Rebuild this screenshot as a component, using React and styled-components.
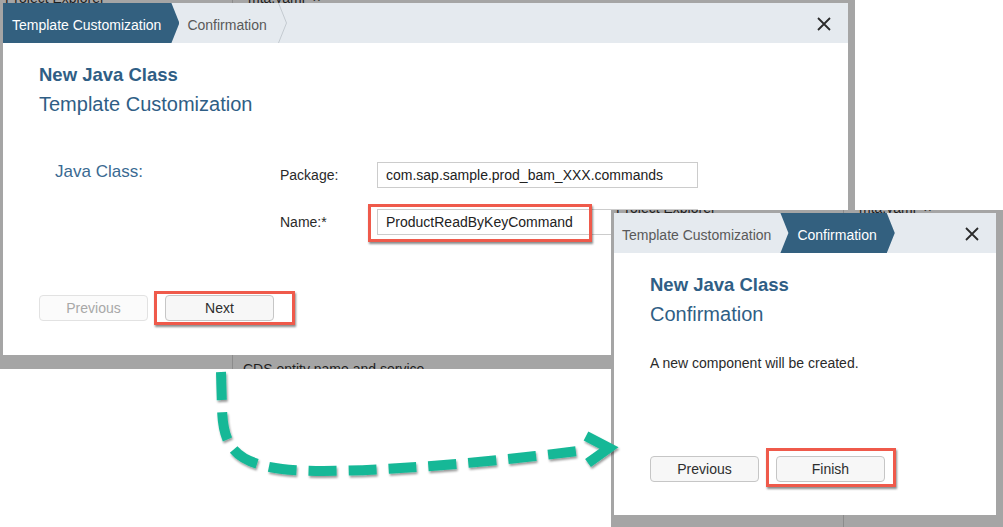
import React from "react";
import styled, { createGlobalStyle } from "styled-components";

const Global = createGlobalStyle`
  html, body { margin: 0; padding: 0; background: #fff; }
  body { font-family: "Liberation Sans", Arial, sans-serif; }
`;

const FONT = `"Liberation Sans", Arial, sans-serif`;

const Stage = styled.div`
  position: relative;
  width: 1003px;
  height: 527px;
  overflow: hidden;
  background: #fff;
`;

/* a captured screenshot placed on the composite canvas */
const Shot = styled.section`
  position: absolute;
  left: ${(p) => p.$x}px;
  top: ${(p) => p.$y}px;
  width: ${(p) => p.$w}px;
  height: ${(p) => p.$h}px;
  background: #a5a5a5;
  overflow: hidden;
`;

/* IDE underneath the modal dialog */
const Ide = styled.div`
  display: grid;
  grid-template-columns: 232px 1px 1fr;
  height: 100%;
  font: 14px/16px ${FONT};
  color: #1e1e1e;
`;
const ExplorerPane = styled.div`
  padding-left: 5px;
  white-space: nowrap;
`;
const PaneTitle = styled.div`
  margin-top: -10px;
`;
const PaneDivider = styled.div`
  background: #8c8c8c;
`;
const EditorPane = styled.div`
  display: flex;
  flex-direction: column;
  padding-left: 10px;
  white-space: nowrap;
`;
const EditorTab = styled.div`
  margin-top: -10px;
  padding-left: 5px;
`;
const EditorBody = styled.div`
  padding-top: 355px;
`;

/* modal dialog */
const Dialog = styled.div`
  position: absolute;
  top: 3px;
  left: 3px;
  width: ${(p) => p.$w}px;
  height: ${(p) => p.$h}px;
  background: #fff;
  display: flex;
  flex-direction: column;
  font-family: ${FONT};
`;

const Header = styled.header`
  flex: none;
  height: 40px;
  display: flex;
  align-items: stretch;
  background: #e5eaef;
`;

const Step = styled.div`
  display: flex;
  align-items: center;
  box-sizing: border-box;
  padding-top: 4px;
  padding-left: ${(p) => (p.$active ? (p.$notch ? 17 : 9) : 8)}px;
  padding-right: ${(p) => (p.$active ? 18 : 9)}px;
  font-size: 14px;
  white-space: nowrap;
  color: ${(p) => (p.$active ? "#ffffff" : "#595959")};
  background: ${(p) => (p.$active ? "#33607f" : "transparent")};
  clip-path: ${(p) =>
    !p.$active
      ? "none"
      : p.$notch
      ? "polygon(0 0, calc(100% - 8px) 0, 100% 50%, calc(100% - 8px) 100%, 0 100%, 8px 50%)"
      : "polygon(0 0, calc(100% - 8px) 0, 100% 50%, calc(100% - 8px) 100%, 0 100%)"};
`;

const StepChevron = styled.svg`
  flex: none;
  margin-left: 2px;
  width: 9px;
  height: 40px;
`;

const CloseButton = styled.button`
  margin-left: auto;
  margin-right: 17px;
  margin-top: 2px;
  align-self: center;
  width: 14px;
  height: 14px;
  padding: 0;
  border: 0;
  background: none;
  display: flex;
`;

const Body = styled.div`
  padding: 20px 36px 0;
  display: flex;
  flex-direction: column;
  align-items: flex-start;
`;

const Title = styled.h2`
  margin: 0;
  font-size: 18.5px;
  line-height: 24px;
  font-weight: 700;
  color: #2f5e85;
`;

const Subtitle = styled.h3`
  margin: 5px 0 0;
  font-size: 20px;
  line-height: 24px;
  font-weight: 400;
  color: #2f5e85;
`;

const FormGrid = styled.div`
  margin-top: 46px;
  display: grid;
  grid-template-columns: 241px 97px 321px;
  grid-auto-rows: 26px;
  row-gap: 21px;
  align-items: center;
`;

const SectionLabel = styled.div`
  align-self: start;
  padding-left: 16px;
  font-size: 17px;
  line-height: 20px;
  color: #3a6a92;
`;

const FieldLabel = styled.label`
  grid-column: 2;
  font-size: 14px;
  color: #2a2a2a;
`;

const FieldCell = styled.div`
  grid-column: 3;
  position: relative;
  height: 26px;
`;

const Input = styled.input`
  box-sizing: border-box;
  width: 100%;
  height: 26px;
  border: 1px solid #cccccc;
  padding: 0 8px;
  font: 14px ${FONT};
  color: #222;
  background: #fff;
  outline: none;
`;

const Message = styled.p`
  margin: 27px 0 0;
  font-size: 14px;
  line-height: 20px;
  color: #2a2a2a;
`;

const ButtonRow = styled.div`
  margin-top: ${(p) => p.$gap}px;
  display: flex;
  align-items: center;
  gap: 17px;
`;

const Button = styled.button`
  box-sizing: border-box;
  width: 109px;
  height: 26px;
  padding: 0;
  border-radius: 4px;
  border: 1px solid ${(p) => (p.disabled ? "#e2e2e2" : "#c6c6c6")};
  background: ${(p) => (p.disabled ? "#fbfbfb" : "#f7f7f7")};
  color: ${(p) => (p.disabled ? "#a8a8a8" : "#2e2e2e")};
  font: 14px ${FONT};
`;

const Annotated = styled.div`
  position: relative;
  display: flex;
`;

/* red call-out frame drawn over the screenshot */
const RedBox = styled.span`
  position: absolute;
  top: ${(p) => p.$t}px;
  right: ${(p) => p.$r}px;
  bottom: ${(p) => p.$b}px;
  left: ${(p) => p.$l}px;
  border: 3px solid #ef5a4b;
  box-shadow: 1px 2px 2px rgba(0, 0, 0, 0.45);
  pointer-events: none;
`;

const ArrowLayer = styled.svg`
  position: absolute;
  left: 0;
  top: 0;
  width: 1003px;
  height: 527px;
  pointer-events: none;
`;

function CloseIcon() {
  return (
    <svg width="14" height="14" viewBox="0 0 14 14">
      <path d="M1 1 L13 13 M13 1 L1 13" stroke="#2b2b2b" strokeWidth="1.8" fill="none" />
    </svg>
  );
}

function IdeBackdrop() {
  return (
    <Ide>
      <ExplorerPane>
        <PaneTitle>Project Explorer</PaneTitle>
      </ExplorerPane>
      <PaneDivider />
      <EditorPane>
        <EditorTab>mta.yaml &nbsp;×</EditorTab>
        <EditorBody>CDS entity name and service</EditorBody>
      </EditorPane>
    </Ide>
  );
}

function WizardHeader({ active }) {
  const first = active === 0;
  return (
    <Header>
      <Step $active={first}>Template Customization</Step>
      <Step $active={!first} $notch={!first}>Confirmation</Step>
      {first && (
        <StepChevron viewBox="0 0 9 40">
          <polyline points="0.5,0 8.5,20 0.5,40" fill="none" stroke="#c4cad0" strokeWidth="1" />
        </StepChevron>
      )}
      <CloseButton aria-label="Close">
        <CloseIcon />
      </CloseButton>
    </Header>
  );
}

export default function App() {
  return (
    <>
      <Global />
      <Stage>
        <Shot $x={0} $y={0} $w={855} $h={369}>
          <IdeBackdrop />
          <Dialog $w={845} $h={352}>
            <WizardHeader active={0} />
            <Body>
              <Title>New Java Class</Title>
              <Subtitle>Template Customization</Subtitle>
              <FormGrid>
                <SectionLabel>Java Class:</SectionLabel>
                <FieldLabel>Package:</FieldLabel>
                <FieldCell>
                  <Input readOnly value="com.sap.sample.prod_bam_XXX.commands" />
                </FieldCell>
                <FieldLabel>Name:*</FieldLabel>
                <FieldCell>
                  <Input readOnly value="ProductReadByKeyCommand" />
                  <RedBox $t={-5} $r={106} $b={-7} $l={-9} />
                </FieldCell>
              </FormGrid>
              <ButtonRow $gap={60}>
                <Button disabled>Previous</Button>
                <Annotated>
                  <Button>Next</Button>
                  <RedBox $t={-4} $r={-21} $b={-4} $l={-11} />
                </Annotated>
              </ButtonRow>
            </Body>
          </Dialog>
        </Shot>

        <Shot $x={611} $y={210} $w={392} $h={317}>
          <IdeBackdrop />
          <Dialog $w={382} $h={302}>
            <WizardHeader active={1} />
            <Body>
              <Title>New Java Class</Title>
              <Subtitle>Confirmation</Subtitle>
              <Message>A new component will be created.</Message>
              <ButtonRow $gap={83}>
                <Button>Previous</Button>
                <Annotated>
                  <Button>Finish</Button>
                  <RedBox $t={-8} $r={-11} $b={-5} $l={-10} />
                </Annotated>
              </ButtonRow>
            </Body>
          </Dialog>
        </Shot>

        <ArrowLayer viewBox="0 0 1003 527">
          <defs>
            <filter id="arrowShadow" x="-10%" y="-10%" width="120%" height="130%">
              <feDropShadow dx="1" dy="2" stdDeviation="1" floodColor="#000" floodOpacity="0.4" />
            </filter>
          </defs>
          <g filter="url(#arrowShadow)" stroke="#17b897" strokeWidth="10" fill="none">
            <path
              d="M221 372 L222 408 C223 448 236 463 282 469 C330 475 460 466 578 451"
              strokeDasharray="28 12"
            />
            <polyline points="586,436 609,448 588,463" strokeLinejoin="miter" />
          </g>
        </ArrowLayer>
      </Stage>
    </>
  );
}
